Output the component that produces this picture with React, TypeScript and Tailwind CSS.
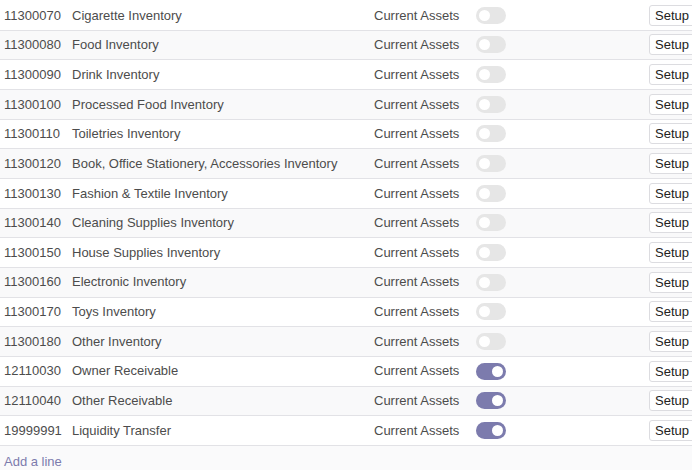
import React from "react"

type Account = { code: string; name: string; reconcile: boolean }

const accounts: Account[] = [
    { code: "11300070", name: "Cigarette Inventory", reconcile: false },
    { code: "11300080", name: "Food Inventory", reconcile: false },
    { code: "11300090", name: "Drink Inventory", reconcile: false },
    { code: "11300100", name: "Processed Food Inventory", reconcile: false },
    { code: "11300110", name: "Toiletries Inventory", reconcile: false },
    { code: "11300120", name: "Book, Office Stationery, Accessories Inventory", reconcile: false },
    { code: "11300130", name: "Fashion & Textile Inventory", reconcile: false },
    { code: "11300140", name: "Cleaning Supplies Inventory", reconcile: false },
    { code: "11300150", name: "House Supplies Inventory", reconcile: false },
    { code: "11300160", name: "Electronic Inventory", reconcile: false },
    { code: "11300170", name: "Toys Inventory", reconcile: false },
    { code: "11300180", name: "Other Inventory", reconcile: false },
    { code: "12110030", name: "Owner Receivable", reconcile: true },
    { code: "12110040", name: "Other Receivable", reconcile: true },
    { code: "19999991", name: "Liquidity Transfer", reconcile: true },
]

function Toggle({ on }: { on: boolean }) {
    return (
        <div className={`w-[30px] h-[17px] rounded-full flex items-center px-[3px] ${on ? "bg-[#7c7bad] justify-end" : "bg-[#e6e6e6] justify-start"}`}>
            <div className="w-[11px] h-[11px] rounded-full bg-white" />
        </div>
    )
}

export default function App() {
    return (
        <div className="w-[692px] h-[470px] overflow-hidden bg-white font-['Liberation_Sans',Arial,sans-serif] text-[13px] text-[#4c4c4c]">
            <div className="w-[720px] pt-[1px] flex flex-col">
                {accounts.map((acc, index) => (
                    <div
                        key={acc.code}
                        className={`h-[29.667px] grid grid-cols-[68px_302px_102px_177px_1fr] items-center border-b border-[#e2e2e6] ${index % 2 === 1 ? "bg-[#f9f9fa]" : "bg-white"}`}
                    >
                        <div className="pl-[4px]">{acc.code}</div>
                        <div className="pl-[4px] whitespace-nowrap">{acc.name}</div>
                        <div className="pl-[4px] whitespace-nowrap">Current Assets</div>
                        <div className="pl-[4px]">
                            <Toggle on={acc.reconcile} />
                        </div>
                        <div>
                            <div className="w-[48px] h-[21px] flex items-center pl-[5px] bg-white border border-[#dcdce0] rounded-[3px] text-[#222] leading-none">
                                Setup
                            </div>
                        </div>
                    </div>
                ))}
                <div className="h-[100px] bg-[#fafafb] pl-[4px] pt-[6px] text-[#7c7bad]">
                    Add a line
                </div>
            </div>
        </div>
    )
}
